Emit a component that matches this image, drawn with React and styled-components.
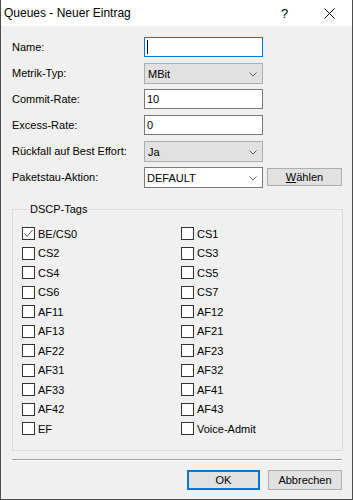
import React from 'react';
import styled, { createGlobalStyle } from 'styled-components';

const Global = createGlobalStyle`
  html, body { margin: 0; padding: 0; background: #f0f0f0; }
  body { font-family: "Liberation Sans", Arial, sans-serif; font-size: 11px; color: #000; }
`;

const Window = styled.div`
  width: 353px;
  height: 500px;
  box-sizing: border-box;
  border: 1px solid #4d4d4d;
  border-top: none;
  background: #f0f0f0;
  display: flex;
  flex-direction: column;
`;

const TitleBar = styled.div`
  height: 26px;
  background: #fff;
  display: flex;
  align-items: center;
  padding-left: 3px;
  font-size: 12px;
`;

const Title = styled.div`
  flex: 1;
`;

const TitleButton = styled.div`
  width: 45px;
  height: 26px;
  display: flex;
  align-items: center;
  justify-content: center;
  font-size: 13px;
`;

const Body = styled.div`
  flex: 1;
  display: flex;
  flex-direction: column;
  padding: 11px 10px 0 11px;
`;

const Form = styled.div`
  display: grid;
  grid-template-columns: 132px 119px auto;
  grid-auto-rows: 21px;
  row-gap: 5px;
  align-items: start;
`;

const Label = styled.div`
  height: 20px;
  line-height: 20px;
`;

const Field = styled.div`
  box-sizing: border-box;
  height: ${p => (p.$combo ? 21 : 20)}px;
  border: 1px solid ${p => (p.$focus ? '#0078d7' : p.$gray ? '#adadad' : '#7a7a7a')};
  background: ${p => (p.$gray ? '#e1e1e1' : '#fff')};
  display: flex;
  align-items: center;
  padding-left: ${p => (p.$gray ? 3 : 2)}px;
  position: relative;
  grid-column: ${p => (p.$wide ? 'span 2' : 'auto')};
  width: 119px;
`;

const Caret = styled.div`
  width: 1px;
  height: 14px;
  background: #000;
`;

const Chevron = styled.svg`
  position: absolute;
  right: 5px;
  top: 50%;
  margin-top: -2px;
`;

const Button = styled.div`
  box-sizing: border-box;
  height: ${p => p.$h || 20}px;
  width: ${p => p.$w}px;
  background: #e1e1e1;
  border: ${p => (p.$default ? '2px solid #0078d7' : '1px solid #adadad')};
  display: flex;
  align-items: center;
  justify-content: center;
  font-size: 11px;
  margin-left: ${p => p.$ml || 0}px;
  margin-top: ${p => p.$mt || 0}px;
  u { text-decoration: underline; }
`;

const Group = styled.fieldset`
  margin: 15px 0 0 0;
  padding: 8px 0 11px 9px;
  border: 1px solid #dcdcdc;
  width: 331px;
  box-sizing: border-box;
  min-width: 0;
`;

const Legend = styled.legend`
  padding: 0 2px;
  margin-left: 6px;
  line-height: 13px;
`;

const Checks = styled.div`
  display: grid;
  grid-template-columns: 159px 1fr;
  grid-auto-rows: 19.5px;
`;

const CheckRow = styled.div`
  display: flex;
  align-items: center;
  gap: 3px;
`;

const Box = styled.div`
  box-sizing: border-box;
  width: 13px;
  height: 13px;
  border: 1px solid #333;
  background: #fff;
  display: flex;
  align-items: center;
  justify-content: center;
`;

const Separator = styled.div`
  margin-top: 8px;
  width: 330px;
  height: 1px;
  background: #a0a0a0;
  border-bottom: 1px solid #fff;
`;

const Footer = styled.div`
  display: flex;
  justify-content: flex-end;
  width: 330px;
  margin-top: 9px;
`;

const tags = [
  ['BE/CS0', true], ['CS1'], ['CS2'], ['CS3'], ['CS4'], ['CS5'], ['CS6'], ['CS7'],
  ['AF11'], ['AF12'], ['AF13'], ['AF21'], ['AF22'], ['AF23'], ['AF31'], ['AF32'],
  ['AF33'], ['AF41'], ['AF42'], ['AF43'], ['EF'], ['Voice-Admit'],
];

const Down = () => (
  <Chevron width="8" height="5" viewBox="0 0 8 5">
    <path d="M0.5 0.5 L4 4 L7.5 0.5" fill="none" stroke="#606060" strokeWidth="1" />
  </Chevron>
);

export default function App() {
  return (
    <>
      <Global />
      <Window>
        <TitleBar>
          <Title>Queues - Neuer Eintrag</Title>
          <TitleButton>?</TitleButton>
          <TitleButton>
            <svg width="11" height="11" viewBox="0 0 11 11">
              <path d="M0.5 0.5 L10.5 10.5 M10.5 0.5 L0.5 10.5" stroke="#000" strokeWidth="1" />
            </svg>
          </TitleButton>
        </TitleBar>
        <Body>
          <Form>
            <Label>Name:</Label>
            <Field $focus $wide><Caret /></Field>
            <Label>Metrik-Typ:</Label>
            <Field $combo $gray $wide>MBit<Down /></Field>
            <Label>Commit-Rate:</Label>
            <Field $wide>10</Field>
            <Label>Excess-Rate:</Label>
            <Field $wide>0</Field>
            <Label>Rückfall auf Best Effort:</Label>
            <Field $combo $gray $wide>Ja<Down /></Field>
            <Label>Paketstau-Aktion:</Label>
            <Field $combo>DEFAULT<Down /></Field>
            <Button $w={75} $h={18} $ml={4} $mt={1}><span><u>W</u>ählen</span></Button>
          </Form>
          <Group>
            <Legend>DSCP-Tags</Legend>
            <Checks>
              {tags.map(([name, on]) => (
                <CheckRow key={name}>
                  <Box>
                    {on && (
                      <svg width="11" height="11" viewBox="0 0 11 11">
                        <path d="M1.5 5.5 L4 8.5 L9.5 2" fill="none" stroke="#555" strokeWidth="1" />
                      </svg>
                    )}
                  </Box>
                  {name}
                </CheckRow>
              ))}
            </Checks>
          </Group>
          <Separator />
          <Footer>
            <Button $w={73} $default>OK</Button>
            <Button $w={74} $ml={8}>Abbrechen</Button>
          </Footer>
        </Body>
      </Window>
    </>
  );
}
